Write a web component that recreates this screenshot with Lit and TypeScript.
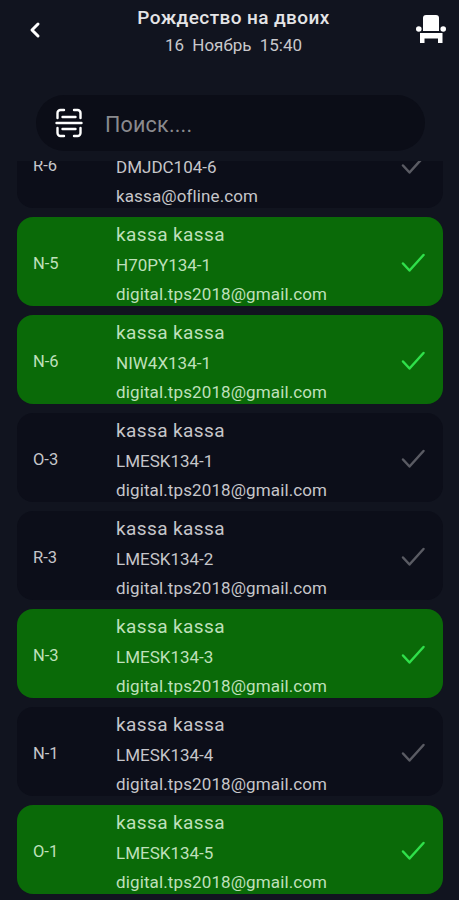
import { LitElement, html, css, svg } from "lit";
import { customElement } from "lit/decorators.js";

interface Row { seat: string; name: string; code: string; mail: string; on: boolean; }

const MAIL = "digital.tps2018@gmail.com";
const ROWS: Row[] = [
  { seat: "R-6", name: "", code: "DMJDC104-6", mail: "kassa@ofline.com", on: false },
  { seat: "N-5", name: "kassa kassa", code: "H70PY134-1", mail: MAIL, on: true },
  { seat: "N-6", name: "kassa kassa", code: "NIW4X134-1", mail: MAIL, on: true },
  { seat: "O-3", name: "kassa kassa", code: "LMESK134-1", mail: MAIL, on: false },
  { seat: "R-3", name: "kassa kassa", code: "LMESK134-2", mail: MAIL, on: false },
  { seat: "N-3", name: "kassa kassa", code: "LMESK134-3", mail: MAIL, on: true },
  { seat: "N-1", name: "kassa kassa", code: "LMESK134-4", mail: MAIL, on: false },
  { seat: "O-1", name: "kassa kassa", code: "LMESK134-5", mail: MAIL, on: true },
];

const check = svg`<path d="M2 10.5 L8.5 17.5 L22.5 2" fill="none" stroke="currentColor" stroke-width="2.5" stroke-linecap="round" stroke-linejoin="round"/>`;

@customElement("app-root")
export class AppRoot extends LitElement {
  static styles = css`
    :host {
      display: block;
      width: 459px;
      height: 900px;
      overflow: hidden;
      background: #11141f;
      font-family: Roboto, "Liberation Sans", sans-serif;
      color: #fff;
    }
    .header {
      height: 95px;
      display: grid;
      grid-template-columns: 70px 1fr 70px;
      align-items: start;
    }
    .back { margin: 20px 0 0 27px; width: 16px; height: 20px; }
    .titles { text-align: center; padding-top: 7px; margin-left: 8px; }
    .title { font-size: 19px; line-height: 22px; font-weight: 500; color: #e4e4e6; letter-spacing: 0.4px; white-space: nowrap; }
    .date { font-size: 17px; line-height: 20px; margin-top: 6px; color: #c8c8cc; word-spacing: 4px; white-space: nowrap; }
    .seat-icon { margin: 15px 0 0 27px; width: 30px; height: 28px; display: block; }
    .search {
      margin: 0 34px 0 36px;
      height: 56px;
      border-radius: 28px;
      background: #0b0d17;
      display: flex;
      align-items: center;
      padding-left: 19px;
      gap: 22px;
    }
    .scan { width: 28px; height: 30px; flex: none; }
    .placeholder { font-size: 21.5px; color: #8a8a8e; letter-spacing: 0.2px; padding-top: 2px; }
    .viewport { height: 739px; margin-top: 10px; overflow: hidden; padding: 0 16px 0 17px; }
    .list { display: flex; flex-direction: column; gap: 9px; margin-top: -42px; }
    .card {
      height: 89px;
      border-radius: 16px;
      background: #0c0e19;
      color: #c6c6ca;
      display: grid;
      grid-template-columns: 99px 1fr 50px;
      align-items: center;
    }
    .card.on { background: #0a6a08; color: #bfe0bb; }
    .seat { padding-left: 16px; font-size: 16.5px; }
    .info { display: grid; grid-auto-rows: 30px; align-items: center; margin-top: 2px; }
    .name { font-size: 19px; letter-spacing: 0.4px; }
    .code { font-size: 17px; padding-top: 1px; }
    .mail { font-size: 17px; letter-spacing: 0.12px; }
    .tick { width: 25px; height: 20px; margin-left: 8px; color: #5a5b63; display: block; }
    .on .tick { color: #2fe04a; }
  `;

  render() {
    return html`
      <div class="header">
        <svg class="back" viewBox="0 0 16 20">
          <path d="M11 4 L5 10 L11 16" fill="none" stroke="#fff" stroke-width="3" stroke-linecap="round" stroke-linejoin="round"/>
        </svg>
        <div class="titles">
          <div class="title">Рождество на двоих</div>
          <div class="date">16 Ноябрь 15:40</div>
        </div>
        <svg class="seat-icon" viewBox="0 0 30 28">
          <path d="M7 3 a3 3 0 0 1 3-3 h10 a3 3 0 0 1 3 3 V16 H7 Z" fill="#fff"/>
          <circle cx="2.8" cy="14" r="2.8" fill="#fff"/>
          <circle cx="27.2" cy="14" r="2.8" fill="#fff"/>
          <path d="M4 18 H26.5 V28 H22 V23.5 H8.5 V28 H4 Z" fill="#fff"/>
        </svg>
      </div>
      <div class="search">
        <svg class="scan" viewBox="0 0 28 30">
          <g fill="none" stroke="#fff" stroke-width="2.4" stroke-linecap="round">
            <path d="M2.5 10 V5 a3 3 0 0 1 3-3 H9"/>
            <path d="M19 2 h3.5 a3 3 0 0 1 3 3 V10"/>
            <path d="M2.5 20 V25 a3 3 0 0 0 3 3 H9"/>
            <path d="M19 28 h3.5 a3 3 0 0 0 3-3 V20"/>
            <path d="M7.5 9 H20.5"/>
            <path d="M1.5 15 H26.5"/>
            <path d="M7.5 21 H20.5"/>
          </g>
        </svg>
        <span class="placeholder">Поиск....</span>
      </div>
      <div class="viewport">
        <div class="list">
          ${ROWS.map(
            (r) => html`
              <div class="card ${r.on ? "on" : ""}">
                <div class="seat">${r.seat}</div>
                <div class="info">
                  <div class="name">${r.name}</div>
                  <div class="code">${r.code}</div>
                  <div class="mail">${r.mail}</div>
                </div>
                <svg class="tick" viewBox="0 0 25 20">${check}</svg>
              </div>
            `
          )}
        </div>
      </div>
    `;
  }
}
